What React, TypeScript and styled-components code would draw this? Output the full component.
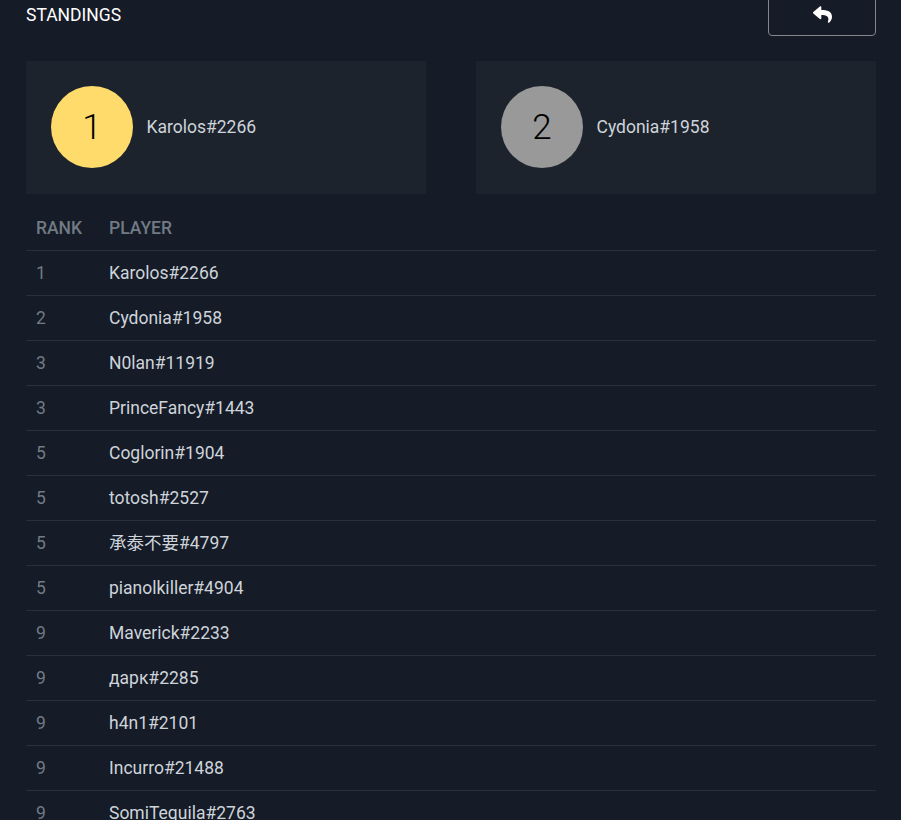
import React from "react";
import styled, { createGlobalStyle } from "styled-components";
import { FaReply } from "react-icons/fa";

const Global = createGlobalStyle`
  html, body { margin: 0; padding: 0; background: #151b27; }
  body { font-family: Roboto, "Noto Sans CJK SC", sans-serif; overflow: hidden; }
`;

const Page = styled.div`
  height: 820px;
  overflow: hidden;
  padding: 0 25px 0 26px;
  background: #151b27;
  box-sizing: border-box;
`;

const Toolbar = styled.header`
  display: flex;
  justify-content: space-between;
  align-items: flex-start;
  height: 61px;
`;

const Title = styled.h1`
  margin: 5px 0 0;
  font-size: 17.5px;
  line-height: 21px;
  font-weight: 400;
  color: #fff;
`;

const BackButton = styled.button`
  width: 108px;
  height: 40px;
  margin-top: -4px;
  display: flex;
  align-items: center;
  justify-content: center;
  padding: 0 0 3px 1px;
  background: transparent;
  border: 1px solid #85878c;
  border-radius: 4px;
  color: #fff;
  font-size: 19px;
`;

const Podium = styled.section`
  display: grid;
  grid-template-columns: 400px 400px;
  column-gap: 50px;
`;

const PodiumCard = styled.div`
  display: flex;
  align-items: center;
  gap: 13.5px;
  height: 132px;
  margin-bottom: 1px;
  padding: 0 25px;
  box-sizing: border-box;
  background: #1d232d;
  box-shadow: 0 1px 0 #1d232d;
`;

const Medal = styled.div<{ $color: string }>`
  width: 82px;
  height: 82px;
  border-radius: 50%;
  flex: none;
  display: flex;
  align-items: center;
  justify-content: center;
  background: ${(p) => p.$color};
  color: #000;
  font-size: 35px;
  font-weight: 300;
`;

const PodiumName = styled.span`
  font-size: 17.5px;
  color: #ced4da;
`;

const Table = styled.table`
  width: 100%;
  table-layout: fixed;
  border-collapse: collapse;
  margin-top: 11px;
  font-size: 17.5px;
  line-height: 21px;
`;

const HeadCell = styled.th`
  height: 45px;
  padding: 2px 10px 0;
  text-align: left;
  font-weight: 500;
  color: #727a84;
  border-bottom: 1px solid #2a303b;
  box-sizing: border-box;
`;

const RankHead = styled(HeadCell)`
  width: 73px;
`;

const Row = styled.tr`
  height: 45px;
  border-bottom: 1px solid #2a303b;
`;

const RankCell = styled.td`
  padding: 1px 10px 0;
  color: #727a84;
`;

const PlayerCell = styled.td`
  padding: 1px 10px 0;
  color: #ced4da;
`;

const standings: [number, string][] = [
  [1, "Karolos#2266"],
  [2, "Cydonia#1958"],
  [3, "N0lan#11919"],
  [3, "PrinceFancy#1443"],
  [5, "Coglorin#1904"],
  [5, "totosh#2527"],
  [5, "承泰不要#4797"],
  [5, "pianolkiller#4904"],
  [9, "Maverick#2233"],
  [9, "дарк#2285"],
  [9, "h4n1#2101"],
  [9, "Incurro#21488"],
  [9, "SomiTequila#2763"],
];

export default function App() {
  return (
    <Page>
      <Global />
      <Toolbar>
        <Title>STANDINGS</Title>
        <BackButton aria-label="Back">
          <FaReply />
        </BackButton>
      </Toolbar>
      <Podium>
        <PodiumCard>
          <Medal $color="#ffdb6c">1</Medal>
          <PodiumName>Karolos#2266</PodiumName>
        </PodiumCard>
        <PodiumCard>
          <Medal $color="#999999">2</Medal>
          <PodiumName>Cydonia#1958</PodiumName>
        </PodiumCard>
      </Podium>
      <Table>
        <thead>
          <tr>
            <RankHead>RANK</RankHead>
            <HeadCell>PLAYER</HeadCell>
          </tr>
        </thead>
        <tbody>
          {standings.map(([rank, name]) => (
            <Row key={name}>
              <RankCell>{rank}</RankCell>
              <PlayerCell>{name}</PlayerCell>
            </Row>
          ))}
        </tbody>
      </Table>
    </Page>
  );
}
